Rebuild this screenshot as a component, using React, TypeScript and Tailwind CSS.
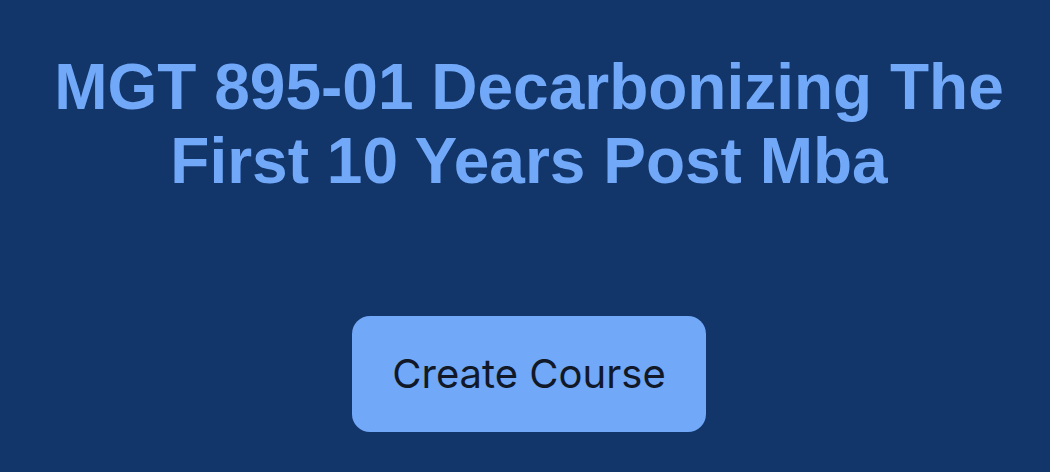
export default function App() {
  return (
    <div className="flex min-h-screen flex-col items-center bg-[#12356a] pl-[52px] pr-[44px] pt-[51px]">
      <h1 className="text-center font-['Liberation_Sans',Arial,sans-serif] text-[64px] font-bold leading-[1.15] text-[#71a8f8]">
        MGT 895-01 Decarbonizing The
        <br />
        First 10 Years Post Mba
      </h1>
      <button className="mt-[118px] flex h-[116px] w-[354px] items-center justify-center rounded-[18px] bg-[#71a8f8] font-['Inter',sans-serif] text-[40px] text-[#111827]">
        Create Course
      </button>
    </div>
  );
}
